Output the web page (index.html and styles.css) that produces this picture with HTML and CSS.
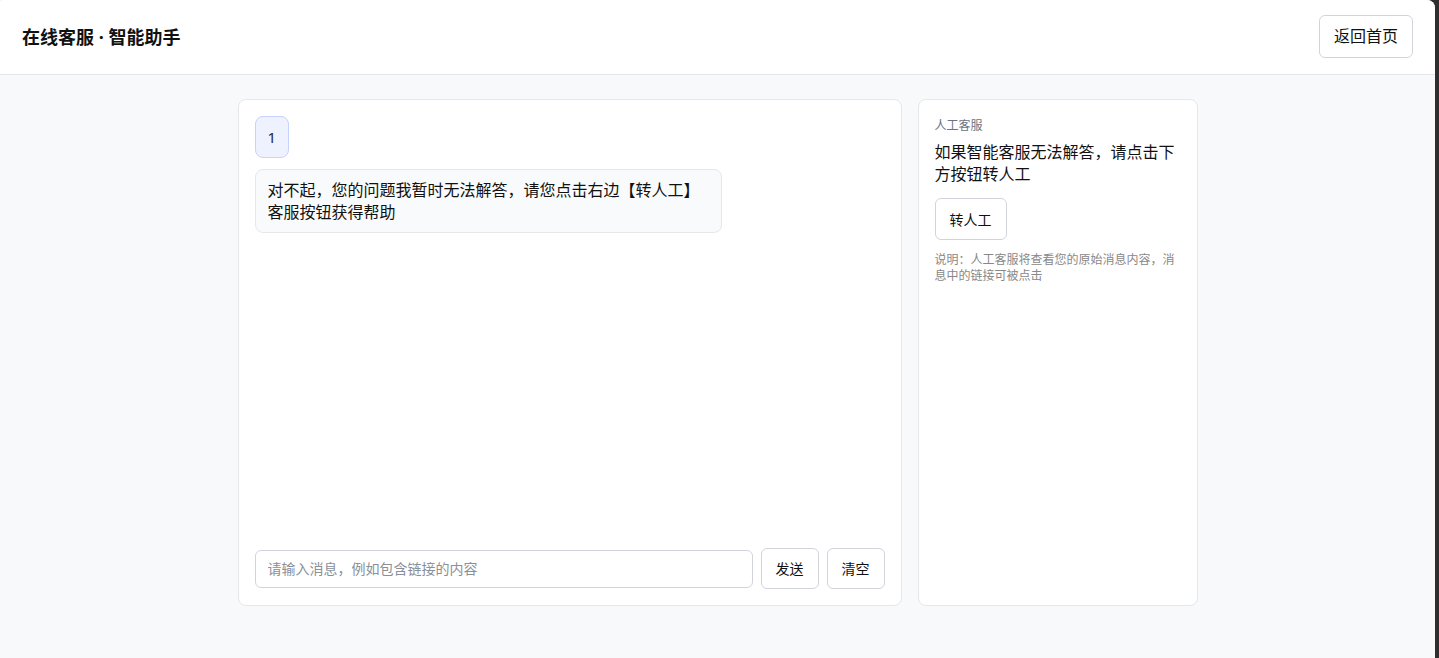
FILE: index.html
```html
<!DOCTYPE html>
<html lang="zh-CN">
<head>
<meta charset="utf-8">
<title>在线客服 · 智能助手</title>
<link rel="stylesheet" href="styles.css">
</head>
<body>
<div class="app">
  <header class="topbar">
    <div class="title">在线客服 · 智能助手</div>
    <button class="btn btn-lg">返回首页</button>
  </header>
  <main class="main">
    <section class="card chat">
      <div class="messages">
        <div class="msg msg-user">1</div>
        <div class="msg msg-bot">对不起，您的问题我暂时无法解答，请您点击右边【转人工】客服按钮获得帮助</div>
      </div>
      <div class="composer">
        <input class="input" type="text" placeholder="请输入消息，例如包含链接的内容">
        <button class="btn">发送</button>
        <button class="btn">清空</button>
      </div>
    </section>
    <aside class="card side">
      <div class="side-label">人工客服</div>
      <div class="side-text">如果智能客服无法解答，请点击下方按钮转人工</div>
      <div><button class="btn">转人工</button></div>
      <div class="side-note">说明：人工客服将查看您的原始消息内容，消息中的链接可被点击</div>
    </aside>
  </main>
</div>
</body>
</html>
```

FILE: styles.css
```css
* { box-sizing: border-box; }
html, body { margin: 0; padding: 0; }
body {
  background: #2e2e2e;
  font-family: "Noto Sans", "Noto Sans CJK SC", sans-serif;
  color: #111827;
}
.app {
  margin-right: 4px;
  min-height: 100vh;
  background: #f8f9fb;
  border-top-right-radius: 8px;
  border-top-left-radius: 1px;
  overflow: hidden;
}
.topbar {
  height: 75px;
  background: #ffffff;
  border-bottom: 1px solid #e5e7eb;
  display: flex;
  align-items: center;
  justify-content: space-between;
  padding: 0 22px 1px 22px;
}
.title {
  font-size: 18px;
  font-weight: 700;
  color: #111111;
  line-height: 24px;
}
.btn {
  font-family: inherit;
  font-size: 14px;
  line-height: 21px;
  padding: 9px 14px;
  background: #ffffff;
  color: #111111;
  border: 1px solid #d1d5db;
  border-radius: 6px;
  cursor: pointer;
}
.btn-lg {
  font-size: 16px;
  line-height: 21px;
  padding: 10px 14px;
}
.main {
  max-width: 960px;
  margin: 24px auto 0;
  display: grid;
  grid-template-columns: 664px 280px;
  gap: 16px;
  height: 507px;
}
.card {
  background: #ffffff;
  border: 1px solid #e5e7eb;
  border-radius: 8px;
  padding: 16px;
}
.chat {
  display: flex;
  flex-direction: column;
}
.messages {
  flex: 1;
  display: flex;
  flex-direction: column;
  align-items: flex-start;
  gap: 11px;
}
.msg {
  box-sizing: content-box;
  max-width: 70%;
  font-size: 15px;
  line-height: 22px;
  padding: 9px 12px;
  border-radius: 8px;
  border: 1px solid #e5e7eb;
}
.msg-user {
  background: #eef2ff;
  border-color: #c7d2fe;
  font-size: 15px;
  padding: 9px 12px;
  color: #1f2937;
}
.msg-bot {
  background: #f8fafc;
  font-size: 16px;
  color: #111111;
}
.composer {
  display: flex;
  align-items: center;
  gap: 8px;
}
.input {
  flex: 1;
  height: 38px;
  font-family: inherit;
  font-size: 14px;
  padding: 0 12px;
  border: 1px solid #d1d5db;
  border-radius: 6px;
  color: #111;
  outline: none;
}
.input::placeholder { color: #8a8f98; }
.side {
  display: flex;
  flex-direction: column;
  align-items: flex-start;
  padding-top: 18px;
}
.side-label {
  font-size: 12px;
  line-height: 16px;
  color: #6b7280;
}
.side-text {
  margin-top: 7px;
  font-size: 16px;
  line-height: 22px;
  color: #111111;
}
.side .btn { margin-top: 13px; padding: 10px 14px 9px; }
.side-note {
  margin-top: 12px;
  font-size: 12px;
  line-height: 16px;
  color: #888888;
}
```
